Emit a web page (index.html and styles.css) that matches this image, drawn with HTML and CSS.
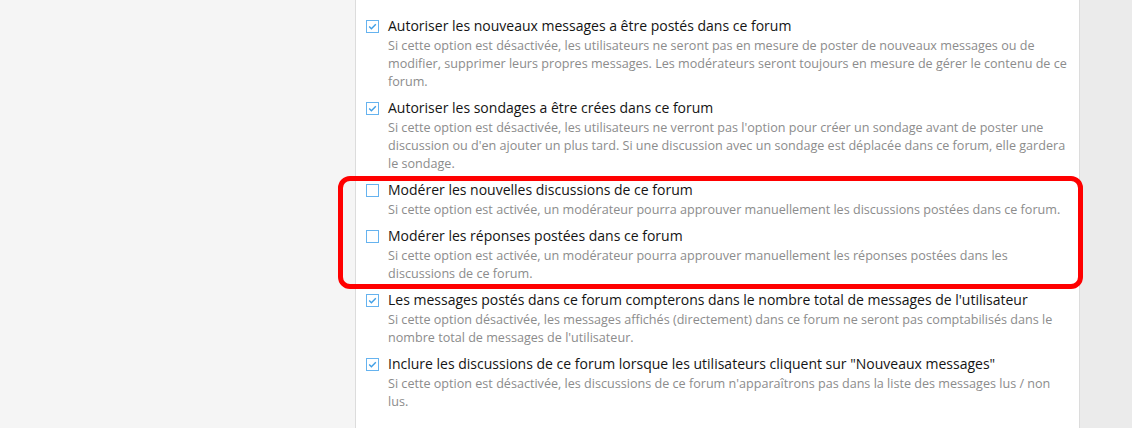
FILE: index.html
```html
<!DOCTYPE html>
<html>
<head>
    <title>Options du forum</title>
    <link rel="stylesheet" href="styles.css">
</head>
<body>
    <div class="page">
        <div class="side"></div>

        <div class="panel">
            <div class="option">
                <svg class="box" width="13" height="13" viewBox="0 0 13 13"><rect x="0.5" y="0.5" width="12" height="12" fill="#fff" stroke="#66b3ef"/><path d="M3.2 6.6 L5.4 8.7 L9.8 4.2" fill="none" stroke="#3f9ee6" stroke-width="1.4"/></svg>
                <div class="text">
                    <div class="label">Autoriser les nouveaux messages a être postés dans ce forum</div>
                    <div class="desc">Si cette option est désactivée, les utilisateurs ne seront pas en mesure de poster de nouveaux messages ou de modifier, supprimer leurs propres messages. Les modérateurs seront toujours en mesure de gérer le contenu de ce forum.</div>
                </div>
            </div>

            <div class="option">
                <svg class="box" width="13" height="13" viewBox="0 0 13 13"><rect x="0.5" y="0.5" width="12" height="12" fill="#fff" stroke="#66b3ef"/><path d="M3.2 6.6 L5.4 8.7 L9.8 4.2" fill="none" stroke="#3f9ee6" stroke-width="1.4"/></svg>
                <div class="text">
                    <div class="label">Autoriser les sondages a être crées dans ce forum</div>
                    <div class="desc">Si cette option est désactivée, les utilisateurs ne verront pas l'option pour créer un sondage avant de poster une discussion ou d'en ajouter un plus tard. Si une discussion avec un sondage est déplacée dans ce forum, elle gardera le sondage.</div>
                </div>
            </div>

            <div class="highlight">
                <div class="option">
                    <svg class="box" width="13" height="13" viewBox="0 0 13 13"><rect x="0.5" y="0.5" width="12" height="12" fill="#fff" stroke="#66b3ef"/></svg>
                    <div class="text">
                        <div class="label">Modérer les nouvelles discussions de ce forum</div>
                        <div class="desc">Si cette option est activée, un modérateur pourra approuver manuellement les discussions postées dans ce forum.</div>
                    </div>
                </div>

                <div class="option">
                    <svg class="box" width="13" height="13" viewBox="0 0 13 13"><rect x="0.5" y="0.5" width="12" height="12" fill="#fff" stroke="#66b3ef"/></svg>
                    <div class="text">
                        <div class="label">Modérer les réponses postées dans ce forum</div>
                        <div class="desc">Si cette option est activée, un modérateur pourra approuver manuellement les réponses postées dans les discussions de ce forum.</div>
                    </div>
                </div>
            </div>

            <div class="option">
                <svg class="box" width="13" height="13" viewBox="0 0 13 13"><rect x="0.5" y="0.5" width="12" height="12" fill="#fff" stroke="#66b3ef"/><path d="M3.2 6.6 L5.4 8.7 L9.8 4.2" fill="none" stroke="#3f9ee6" stroke-width="1.4"/></svg>
                <div class="text">
                    <div class="label">Les messages postés dans ce forum compterons dans le nombre total de messages de l'utilisateur</div>
                    <div class="desc">Si cette option désactivée, les messages affichés (directement) dans ce forum ne seront pas comptabilisés dans le nombre total de messages de l'utilisateur.</div>
                </div>
            </div>

            <div class="option">
                <svg class="box" width="13" height="13" viewBox="0 0 13 13"><rect x="0.5" y="0.5" width="12" height="12" fill="#fff" stroke="#66b3ef"/><path d="M3.2 6.6 L5.4 8.7 L9.8 4.2" fill="none" stroke="#3f9ee6" stroke-width="1.4"/></svg>
                <div class="text">
                    <div class="label">Inclure les discussions de ce forum lorsque les utilisateurs cliquent sur "Nouveaux messages"</div>
                    <div class="desc">Si cette option est désactivée, les discussions de ce forum n'apparaîtrons pas dans la liste des messages lus / non lus.</div>
                </div>
            </div>
        </div>

        <div class="side side-right"></div>
    </div>
</body>
</html>
```

FILE: styles.css
```css
html, body {
    margin: 0;
    height: 100%;
}

body {
    font-family: "Open Sans", "Noto Sans", Arial, sans-serif;
    background-color: #f5f5f5;
    overflow: hidden;
}

.page {
    display: flex;
    height: 100%;
}

.side {
    width: 355px;
    flex-shrink: 0;
    background-color: #f5f5f5;
}

.side-right {
    flex: 1;
    background-color: #ebebeb;
}

.panel {
    width: 725px;
    flex-shrink: 0;
    background-color: #fff;
    border-left: 1px solid #dcdcdc;
    border-right: 1px solid #dcdcdc;
    padding: 15px 10px 0 10px;
    box-sizing: border-box;
}

.option {
    display: flex;
    margin-bottom: 6px;
}

.box {
    flex-shrink: 0;
    margin-top: 5px;
    margin-right: 9px;
}

.text {
    flex: 1;
}

.label {
    font-size: 14px;
    line-height: 22px;
    color: #141414;
}

.desc {
    font-size: 12.6px;
    line-height: 18px;
    color: #8c8c8c;
}

.highlight {
    position: relative;
}

.highlight::after {
    content: "";
    position: absolute;
    top: -3px;
    bottom: -6px;
    left: -28px;
    right: -14px;
    border: 5px solid #ff0000;
    border-radius: 12px;
    pointer-events: none;
}
```
